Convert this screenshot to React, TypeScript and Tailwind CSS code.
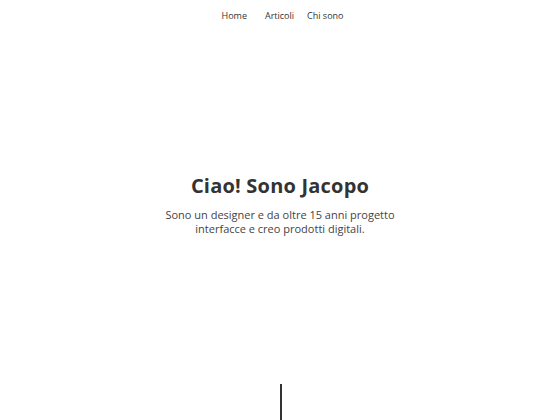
const App = () => {
  return (
    <div className="h-[420px] w-[560px] overflow-hidden bg-white text-[#333] flex flex-col" style={{ fontFamily: '"Open Sans", sans-serif' }}>
      <nav className="flex justify-center pt-[9px] pl-[5px] text-[9px] text-[#333]">
        <a>Home</a>
        <a className="ml-[18px]">Articoli</a>
        <a className="ml-[13px]">Chi sono</a>
      </nav>
      <div className="flex flex-col items-center pt-[150px]">
        <h1 className="text-[20px] font-bold leading-[26px] tracking-[0.2px]">Ciao! Sono Jacopo</h1>
        <p className="mt-[9px] text-center text-[11px] leading-[14px] text-[#444]">
          Sono un designer e da oltre 15 anni progetto
          <br />
          interfacce e creo prodotti digitali.
        </p>
      </div>
      <div className="mt-auto flex justify-center pl-[2px]">
        <div className="h-[36px] w-[2px] bg-[#333]" />
      </div>
    </div>
  );
};

export default App;
